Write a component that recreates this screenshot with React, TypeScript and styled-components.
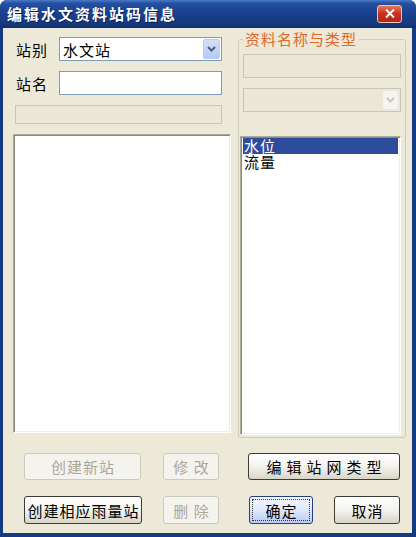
import React from "react";
import styled, { createGlobalStyle, css } from "styled-components";

const GlobalStyle = createGlobalStyle`
  html, body {
    margin: 0;
    padding: 0;
    background: #ffffff;
  }
  body {
    font-family: "Noto Sans CJK SC", "Liberation Sans", sans-serif;
  }
`;

const Chevron = ({ color }: { color: string }) => (
  <svg width="9" height="6" viewBox="0 0 9 6">
    <path d="M1 1 L4.5 4.5 L8 1" fill="none" stroke={color} strokeWidth="2" />
  </svg>
);

export default function App() {
  return (
    <>
      <GlobalStyle />
      <Window>
        <TitleBar>
          <Title>编辑水文资料站码信息</Title>
          <CloseButton>
            <svg width="10" height="9" viewBox="0 0 10 9">
              <path d="M1 0.5 L9 8.5 M9 0.5 L1 8.5" stroke="#fff" strokeWidth="2" />
            </svg>
          </CloseButton>
        </TitleBar>
        <Body>
          <Main>
            <LeftCol>
              <FieldRow>
                <Label>站别</Label>
                <Combo>
                  <ComboText>水文站</ComboText>
                  <DropButton>
                    <Chevron color="#4d6185" />
                  </DropButton>
                </Combo>
              </FieldRow>
              <FieldRow>
                <Label>站名</Label>
                <TextBox />
              </FieldRow>
              <DisabledBox $width={207} $height={19} $left={2} />
              <ListBox $width={218} $top={0} />
            </LeftCol>
            <Group>
              <Legend>资料名称与类型</Legend>
              <DisabledBox $width={158} $height={24} $left={4} />
              <DisabledCombo>
                <DropButton $disabled>
                  <Chevron color="#c9c7ba" />
                </DropButton>
              </DisabledCombo>
              <ListBox $width={161} $left={1} $top={24}>
                <ListItem $selected>水位</ListItem>
                <ListItem>流量</ListItem>
              </ListBox>
            </Group>
          </Main>
          <Buttons>
            <Button $w={117} $h={27} $disabled>创建新站</Button>
            <Button $w={56} $h={27} $disabled>修 改</Button>
            <Button $w={152} $h={27} $spaced>编辑站网类型</Button>
            <Button $w={118} $h={28}>创建相应雨量站</Button>
            <Button $w={56} $h={28} $disabled>删 除</Button>
            <Pair>
              <Button $w={64} $h={28} $focused>确定</Button>
              <Button $w={66} $h={28}>取消</Button>
            </Pair>
          </Buttons>
        </Body>
      </Window>
    </>
  );
}

const Window = styled.div`
  width: 416px;
  height: 537px;
  background: #153a84;
  border-radius: 7px 7px 0 0;
  display: flex;
  flex-direction: column;
  overflow: hidden;
`;

const TitleBar = styled.div`
  height: 28px;
  flex: none;
  display: flex;
  align-items: center;
  justify-content: space-between;
  padding: 0 14px 0 7px;
  background: linear-gradient(
    to bottom,
    #4a78c8 0%,
    #24509f 12%,
    #1a418f 45%,
    #15397f 85%,
    #10306f 100%
  );
`;

const Title = styled.div`
  color: #ffffff;
  font-size: 15px;
  font-weight: bold;
  letter-spacing: 2px;
  text-shadow: 1px 1px 0 #0a1f4d;
  margin-top: -1px;
`;

const CloseButton = styled.div`
  width: 23px;
  height: 16px;
  margin-top: -1px;
  border: 1px solid #e8c8c0;
  border-radius: 3px;
  background: linear-gradient(to bottom, #e8775a 0%, #c9341a 45%, #b52410 100%);
  display: flex;
  align-items: center;
  justify-content: center;
`;

const Body = styled.div`
  flex: 1;
  margin: 0 4px 4px 3px;
  background: #ece9d8;
  display: flex;
  flex-direction: column;
`;

const Main = styled.div`
  display: flex;
  align-items: flex-start;
  gap: 7px;
  padding: 0 6px 0 10px;
`;

const LeftCol = styled.div`
  width: 218px;
  display: flex;
  flex-direction: column;
  padding-top: 9px;
  gap: 10px;
`;

const FieldRow = styled.div`
  display: flex;
  align-items: center;
  height: 24px;
`;

const Label = styled.div`
  width: 43px;
  padding-left: 3px;
  font-size: 15px;
  letter-spacing: 1px;
  color: #000000;
`;

const Combo = styled.div`
  width: 163px;
  height: 24px;
  box-sizing: border-box;
  border: 1px solid #7f9db9;
  background: #ffffff;
  display: flex;
  align-items: center;
  justify-content: space-between;
  padding: 1px;
`;

const ComboText = styled.span`
  padding-left: 2px;
  font-size: 15px;
  letter-spacing: 1px;
  color: #000000;
`;

const DropButton = styled.div<{ $disabled?: boolean }>`
  width: 17px;
  height: 20px;
  box-sizing: border-box;
  border-radius: 2px;
  display: flex;
  align-items: center;
  justify-content: center;
  ${(p) =>
    p.$disabled
      ? css`
          border: 1px solid #e8e6dc;
          background: #f5f4ef;
        `
      : css`
          border: 1px solid #b9cdf5;
          background: linear-gradient(to bottom, #d4e0fb, #b6c9f5);
        `}
`;

const TextBox = styled.div`
  width: 163px;
  height: 24px;
  box-sizing: border-box;
  border: 1px solid #7f9db9;
  background: #ffffff;
`;

const DisabledBox = styled.div<{ $width: number; $height: number; $left: number }>`
  width: ${(p) => p.$width}px;
  height: ${(p) => p.$height}px;
  margin-left: ${(p) => p.$left}px;
  box-sizing: border-box;
  border: 1px solid #c9c6b6;
  background: #ebe8d7;
`;

const DisabledCombo = styled.div`
  width: 158px;
  height: 24px;
  margin: 10px 0 0 4px;
  box-sizing: border-box;
  border: 1px solid #c9c6b6;
  background: #ebe8d7;
  display: flex;
  align-items: center;
  justify-content: flex-end;
  padding: 1px;
`;

const ListBox = styled.div<{ $width: number; $left?: number; $top: number }>`
  width: ${(p) => p.$width}px;
  height: 299px;
  margin-left: ${(p) => p.$left || 0}px;
  margin-top: ${(p) => p.$top}px;
  box-sizing: border-box;
  border-style: solid;
  border-width: 1px;
  border-color: #aca899 #ffffff #ffffff #aca899;
  box-shadow: inset 1px 1px 0 #8b897e, inset -1px -1px 0 #f1efe2;
  background: #ffffff;
  padding: 1px 2px 2px 2px;
  display: flex;
  flex-direction: column;
`;

const Group = styled.fieldset`
  width: 168px;
  height: 408px;
  margin: 2px 0 0 0;
  padding: 6px 0 0 0;
  box-sizing: border-box;
  border: 1px solid #d0ccb8;
  border-radius: 3px;
  display: flex;
  flex-direction: column;
`;

const Legend = styled.legend`
  margin-left: 4px;
  padding: 0 2px;
  font-size: 15px;
  line-height: 18px;
  letter-spacing: 1px;
  color: #e0682a;
`;

const ListItem = styled.div<{ $selected?: boolean }>`
  height: 16px;
  line-height: 16px;
  font-size: 15px;
  letter-spacing: 1px;
  padding-left: 1px;
  color: ${(p) => (p.$selected ? "#ffffff" : "#000000")};
  background: ${(p) => (p.$selected ? "#2e4c9d" : "transparent")};
`;

const Buttons = styled.div`
  display: grid;
  grid-template-columns: 139px 85px 152px;
  grid-template-rows: 27px 28px;
  row-gap: 16px;
  margin-top: 15px;
  padding-left: 21px;
  align-items: start;
`;

const Pair = styled.div`
  display: flex;
  justify-content: space-between;
  padding-left: 1px;
`;

const Button = styled.div<{
  $w: number;
  $h: number;
  $disabled?: boolean;
  $focused?: boolean;
  $spaced?: boolean;
}>`
  width: ${(p) => p.$w}px;
  height: ${(p) => p.$h}px;
  box-sizing: border-box;
  border-radius: 3px;
  display: flex;
  align-items: center;
  justify-content: center;
  font-size: 15px;
  letter-spacing: ${(p) => (p.$spaced ? "5px" : "1px")};
  text-indent: ${(p) => (p.$spaced ? "5px" : "1px")};
  white-space: pre;
  position: relative;
  ${(p) =>
    p.$disabled
      ? css`
          border: 1px solid #cdcabc;
          background: #f4f3ee;
          color: #aca899;
        `
      : p.$focused
      ? css`
          border: 1px solid #203f87;
          background: linear-gradient(to bottom, #f4f7fe 0%, #dfe7fb 50%, #b9cbf3 100%);
          color: #000000;
          &::after {
            content: "";
            position: absolute;
            inset: 2px;
            border: 1px dotted #3a3a3a;
          }
        `
      : css`
          border: 1px solid #3c3b36;
          background: linear-gradient(to bottom, #ffffff 0%, #f4f3ee 50%, #d8d4c8 100%);
          color: #000000;
        `}
`;
